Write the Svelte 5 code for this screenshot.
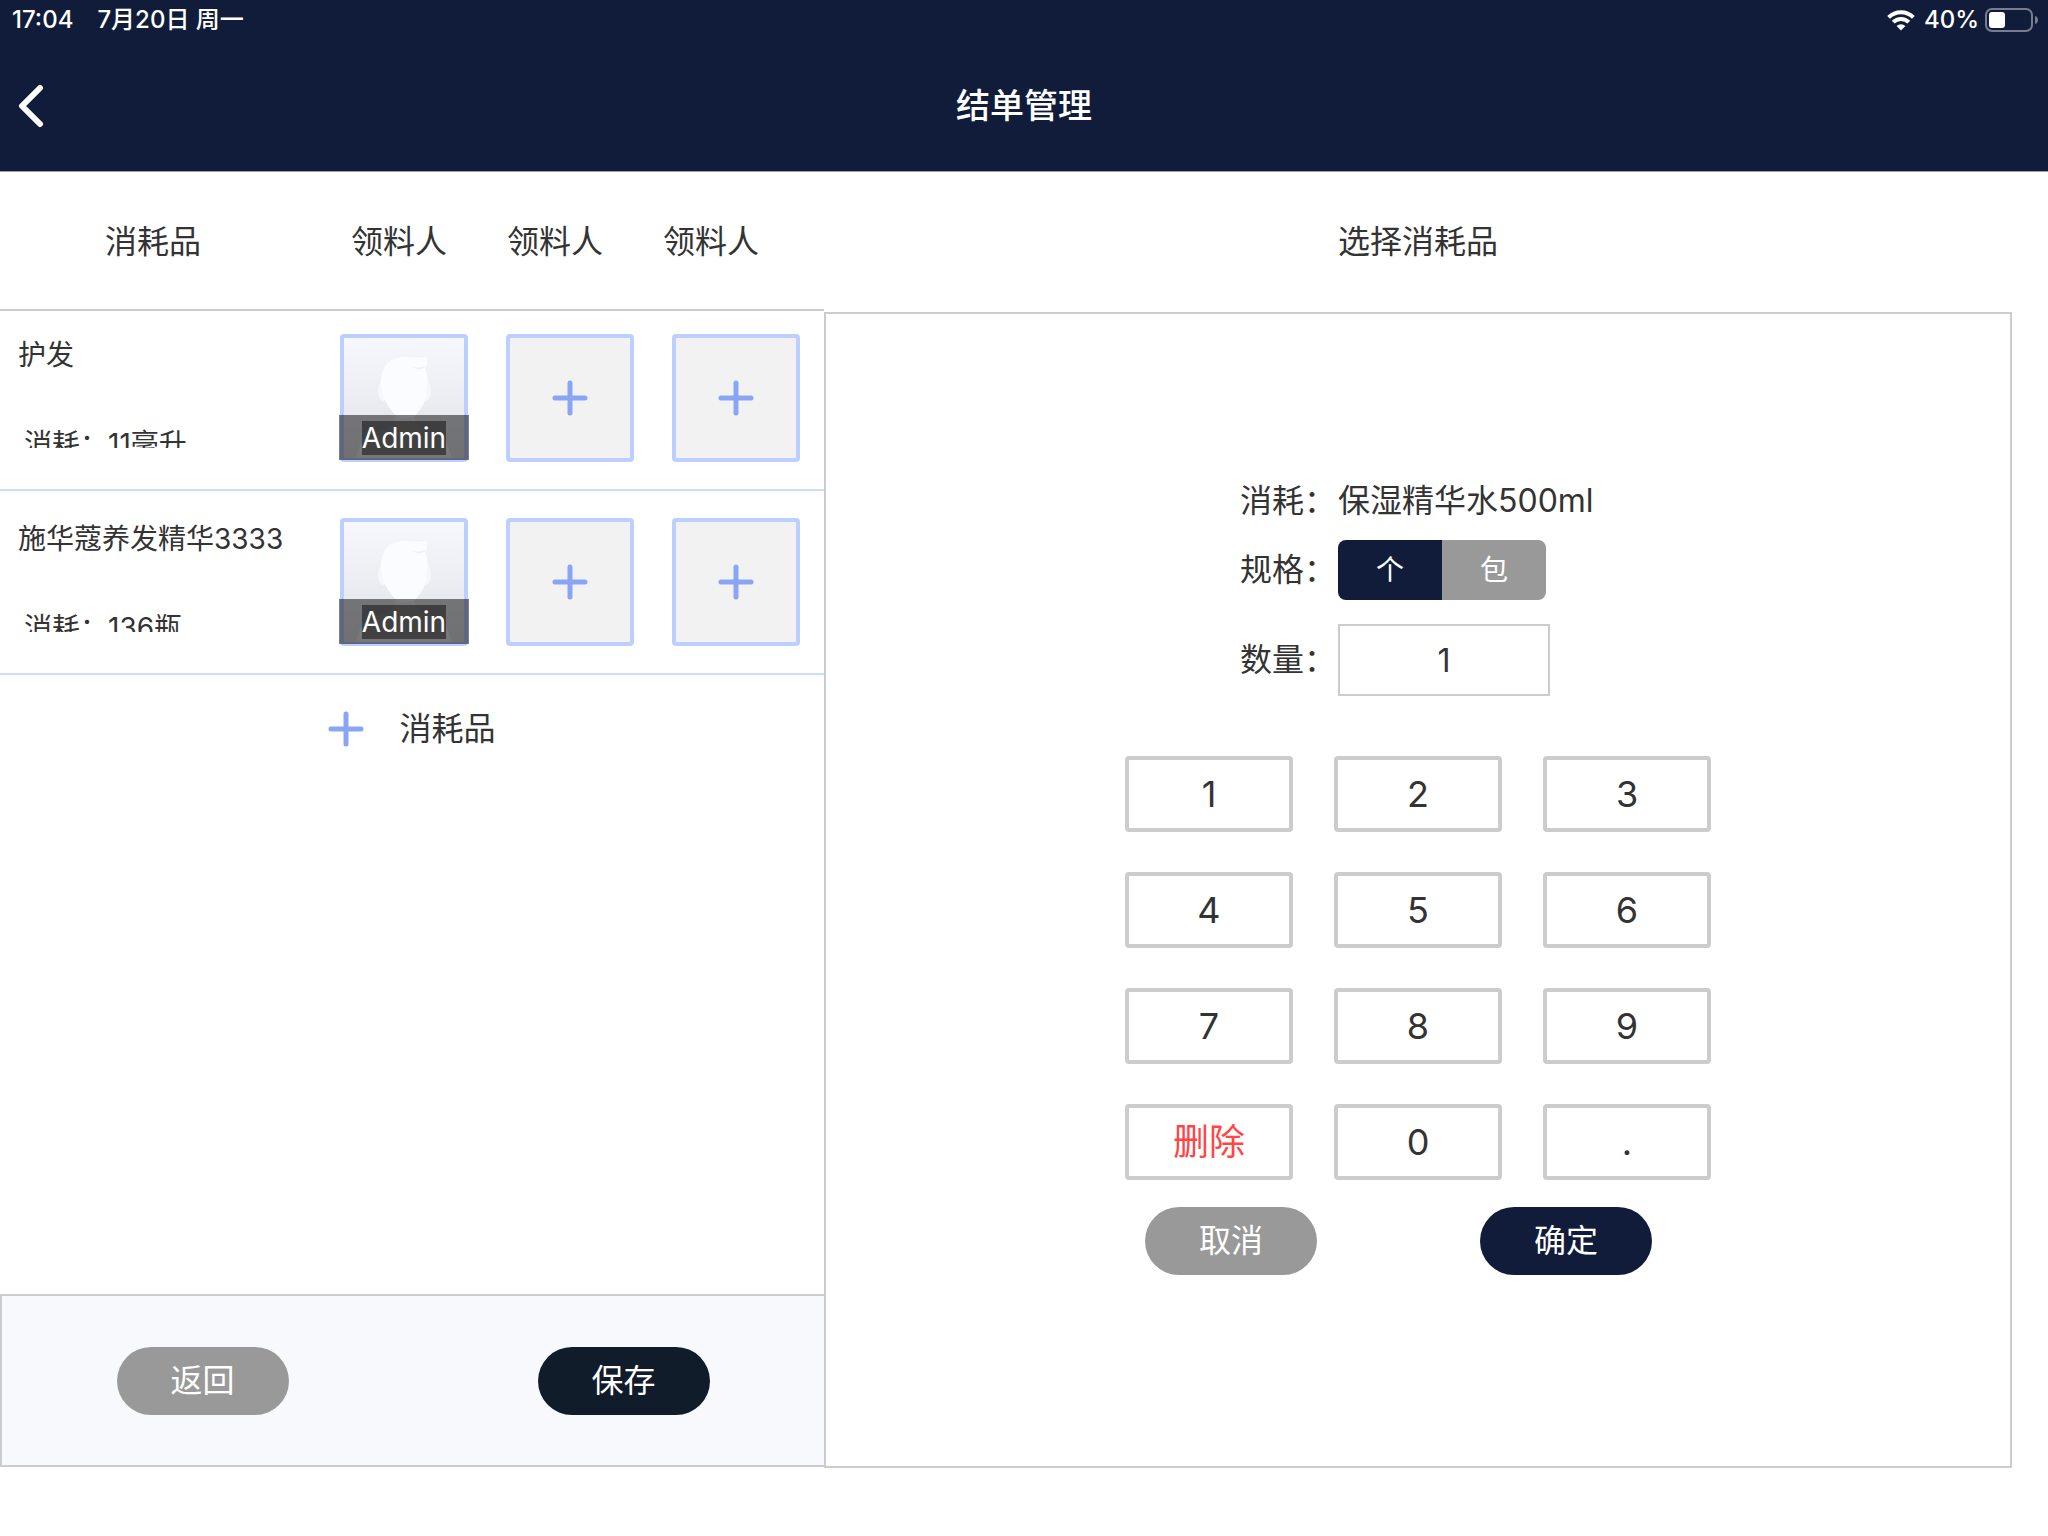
<script lang="ts">
  type Item = { name: string; usage: string; person: string };

  const items: Item[] = [
    { name: '护发', usage: '消耗：11毫升', person: 'Admin' },
    { name: '施华蔻养发精华3333', usage: '消耗：136瓶', person: 'Admin' }
  ];

  const units = ['个', '包'];
  const keys = ['1', '2', '3', '4', '5', '6', '7', '8', '9', '删除', '0', '.'];

  let unit = $state('个');
  let amount = $state('1');

  function press(key: string) {
    if (key === '删除') {
      amount = amount.slice(0, -1);
    } else {
      amount += key;
    }
  }
</script>

{#snippet plus()}
  <svg class="plus" viewBox="0 0 36 36" aria-hidden="true">
    <path d="M18 3v30M3 18h30" />
  </svg>
{/snippet}

<div class="page">
  <header class="top">
    <div class="status">
      <span>17:04</span>
      <span class="date">7月20日 周一</span>
      <svg class="wifi" viewBox="0 0 28 21" aria-hidden="true">
        <path d="M1.6 7.4a17.5 17.5 0 0 1 24.8 0" />
        <path d="M6.2 12.2a11 11 0 0 1 15.6 0" />
        <path class="dot" d="M9.6 16a6.4 6.4 0 0 1 8.8 0L14 20.6z" />
      </svg>
      <span>40%</span>
      <svg class="battery" viewBox="0 0 54 24" aria-hidden="true">
        <rect class="case" x="1" y="1" width="46" height="22" rx="6" />
        <rect class="level" x="4" y="4" width="16" height="16" rx="3" />
        <path class="tip" d="M50 8c4 1 4 7 0 8z" />
      </svg>
    </div>
    <div class="title-bar">
      <button class="back" aria-label="返回">
        <svg viewBox="0 0 30 44" aria-hidden="true">
          <path d="M25 4 7 22l18 18" />
        </svg>
      </button>
      <h1>结单管理</h1>
    </div>
  </header>

  <main>
    <section class="left">
      <div class="list-head">
        <span class="col-name">消耗品</span>
        <div class="cols">
          <span>领料人</span>
          <span>领料人</span>
          <span>领料人</span>
        </div>
      </div>

      <div class="list">
        {#each items as item}
          <div class="row">
            <div class="info">
              <p>{item.name}</p>
              <p class="usage">{item.usage}</p>
            </div>
            <div class="people">
              <button class="tile avatar">
                <svg viewBox="0 0 120 120" aria-hidden="true">
                  <ellipse class="ear" cx="39" cy="53" rx="5" ry="10" />
                  <ellipse class="ear" cx="82" cy="53" rx="5" ry="10" />
                  <path class="body" d="M51 74v8c-2 8-12 9-24 13-8 3-10 8-15 25h96c-5-17-7-22-15-25-12-4-20-5-22-13v-8z" />
                  <path class="head" d="M37 45C37 28 46 19 61 19c9 0 17 2 21-1 2 5 1 9-1 12 3 6 3 14 2 21 0 12-5 18-11 26-3 4-18 4-21 0C45 69 37 60 37 45z" />
                  <path class="hair" d="M68 28c4 2 9 2 13 0 0 4-9 5-13 0z" />
                </svg>
                <span class="strip"><span>{item.person}</span></span>
              </button>
              <button class="tile" aria-label="领料人">{@render plus()}</button>
              <button class="tile" aria-label="领料人">{@render plus()}</button>
            </div>
          </div>
        {/each}
        <button class="add">{@render plus()}消耗品</button>
      </div>

      <footer>
        <button class="pill gray">返回</button>
        <button class="pill dark">保存</button>
      </footer>
    </section>

    <section class="right">
      <h2>选择消耗品</h2>
      <div class="panel">
        <div class="editor">
          <div class="form">
            <div class="field">
              <span class="label">消耗：</span>
              <span>保湿精华水500ml</span>
            </div>
            <div class="field">
              <span class="label" id="unit-label">规格：</span>
              <div class="units" role="group" aria-labelledby="unit-label">
                {#each units as u}
                  <button class:active={unit === u} onclick={() => (unit = u)}>{u}</button>
                {/each}
              </div>
            </div>
            <div class="field">
              <label class="label" for="amount">数量：</label>
              <input id="amount" type="text" bind:value={amount} />
            </div>
          </div>

          <div class="keypad">
            {#each keys as key}
              <button class:delete={key === '删除'} onclick={() => press(key)}>{key}</button>
            {/each}
          </div>

          <div class="actions">
            <button class="pill gray">取消</button>
            <button class="pill navy">确定</button>
          </div>
        </div>
      </div>
    </section>
  </main>
</div>

<style>
  :global(body) {
    background: #fff;
  }

  .page {
    display: flex;
    flex-direction: column;
    min-height: 100vh;
    color: #333;
    font-family: Inter, 'Noto Sans CJK SC', sans-serif;
    font-size: 32px;
    line-height: 40px;
  }

  button,
  input {
    box-sizing: border-box;
    margin: 0;
    padding: 0;
    border: 0;
    background: none;
    color: inherit;
    font: inherit;
  }

  button {
    cursor: pointer;
  }

  h1,
  h2,
  p {
    margin: 0;
    font-weight: 400;
  }

  svg {
    display: block;
    fill: none;
    stroke-linecap: round;
    stroke-linejoin: round;
  }

  .top {
    background: #111c3a;
    color: #fff;
    border-bottom: 1px solid #9a9ea9;
  }

  .status {
    display: flex;
    align-items: center;
    height: 40px;
    padding: 0 9px 0 12px;
    font-size: 24px;
    font-weight: 500;
  }

  .date {
    margin-left: 24px;
  }

  .wifi {
    width: 28px;
    height: 21px;
    margin: 0 9px 0 auto;
    stroke: #fff;
    stroke-width: 4;
    stroke-linecap: butt;
  }

  .wifi .dot {
    fill: #fff;
    stroke: none;
  }

  .battery {
    width: 54px;
    height: 24px;
    margin-left: 6px;
  }

  .battery .case {
    stroke: #787e90;
    stroke-width: 2;
  }

  .battery .level {
    fill: #fff;
  }

  .battery .tip {
    fill: #787e90;
  }

  .title-bar {
    display: grid;
    grid-template-columns: 60px 1fr 60px;
    align-items: center;
    height: 131px;
  }

  .back {
    display: flex;
    padding-left: 15px;
  }

  .back svg {
    width: 30px;
    height: 44px;
    stroke: #fff;
    stroke-width: 6;
  }

  h1 {
    font-size: 34px;
    font-weight: 500;
    text-align: center;
  }

  main {
    flex: 1;
    display: grid;
    grid-template-columns: 103fr 153fr;
  }

  .left,
  .right {
    display: flex;
    flex-direction: column;
    min-width: 0;
  }

  .left {
    padding-bottom: 69px;
  }

  .right {
    padding: 0 36px 68px 0;
  }

  .list-head {
    display: flex;
    align-items: center;
    justify-content: space-between;
    height: 135px;
    padding: 2px 35px 0 0;
    border-bottom: 2px solid #ccc;
    text-align: center;
  }

  .col-name {
    width: 306px;
  }

  .cols {
    display: grid;
    grid-template-columns: repeat(3, 156px);
  }

  .list {
    flex: 1;
    margin-top: -4px;
  }

  .row {
    display: flex;
    justify-content: space-between;
    padding: 27px 24px 27px 18px;
    border-bottom: 2px solid #cfdcfd;
    font-size: 28px;
  }

  .info {
    padding-top: 1px;
  }

  .usage {
    height: 24px;
    margin-top: 49px;
    padding-left: 6px;
    overflow: hidden;
  }

  .people {
    display: flex;
    gap: 38px;
  }

  .tile {
    position: relative;
    display: flex;
    align-items: center;
    justify-content: center;
    width: 128px;
    height: 128px;
    border: 4px solid #bccfff;
    border-radius: 4px;
    background: #f2f2f2;
  }

  .plus {
    width: 36px;
    height: 36px;
    stroke: #8ba5f5;
    stroke-width: 5;
  }

  .avatar {
    background: linear-gradient(#f6f8fe, #e1e2e7);
  }

  .avatar svg {
    width: 120px;
    height: 120px;
  }

  .avatar .head {
    fill: #fbfcff;
  }

  .avatar .ear {
    fill: #f6f7fb;
  }

  .avatar .body {
    fill: #f0f1f5;
  }

  .avatar .hair {
    fill: #eef0f7;
  }

  .strip {
    position: absolute;
    right: -5px;
    bottom: -2px;
    left: -5px;
    display: flex;
    align-items: center;
    justify-content: center;
    height: 45px;
    background: rgba(0, 0, 0, 0.5);
    color: #fff;
  }

  .strip span {
    background: rgba(0, 0, 0, 0.46);
    line-height: 34px;
  }

  .add {
    display: flex;
    align-items: center;
    justify-content: center;
    gap: 35px;
    width: 100%;
    height: 108px;
  }

  footer {
    display: flex;
    align-items: center;
    justify-content: center;
    gap: 249px;
    height: 169px;
    border: 2px solid #ccc;
    border-right: 0;
    background: #f7f9fc;
  }

  .pill {
    width: 172px;
    height: 68px;
    border-radius: 34px;
    color: #fff;
  }

  .gray {
    background: #999;
  }

  .dark {
    background: #111c2b;
  }

  .navy {
    background: #111c3a;
  }

  h2 {
    font-size: 32px;
    line-height: 140px;
    text-align: center;
  }

  .panel {
    flex: 1;
    display: flex;
    justify-content: center;
    padding-top: 172px;
    border: 2px solid #ccc;
  }

  .form {
    display: flex;
    flex-direction: column;
    gap: 24px;
    padding-left: 115px;
  }

  .field {
    display: flex;
    align-items: center;
    line-height: 30px;
  }

  .label {
    width: 98px;
  }

  .units {
    display: flex;
    overflow: hidden;
    border-radius: 8px;
  }

  .units button {
    width: 104px;
    height: 60px;
    background: #999;
    color: #fff;
    font-size: 28px;
  }

  .units .active {
    background: #111c3a;
  }

  input {
    width: 212px;
    height: 72px;
    border: 2px solid #ccc;
    text-align: center;
  }

  .keypad {
    display: grid;
    grid-template-columns: repeat(3, 168px);
    gap: 40px 41px;
    margin-top: 60px;
  }

  .keypad button {
    height: 76px;
    border: 4px solid #ccc;
    border-radius: 4px;
    font-size: 36px;
  }

  .keypad .delete {
    color: #ff4545;
  }

  .actions {
    display: flex;
    gap: 163px;
    margin: 27px 0 0 20px;
  }
</style>
